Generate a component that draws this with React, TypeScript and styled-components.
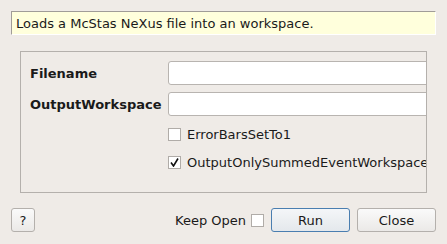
import styled, { createGlobalStyle } from 'styled-components';

const Global = createGlobalStyle`
  html, body {
    margin: 0;
    padding: 0;
    background: #efebe7;
  }
  body {
    font-family: "DejaVu Sans", "Liberation Sans", sans-serif;
    font-size: 13px;
    color: #1a1a1a;
  }
`;

const Dialog = styled.div`
  width: 447px;
  height: 244px;
  box-sizing: border-box;
  padding: 11px 11px 0 11px;
  display: flex;
  flex-direction: column;
  overflow: hidden;
`;

const Tip = styled.div`
  height: 24px;
  box-sizing: border-box;
  background: #ffffdc;
  border-top: 1px solid #a09c98;
  border-left: 1px solid #a09c98;
  border-right: 1px solid #ffffff;
  border-bottom: 1px solid #ffffff;
  padding: 0 0 0 4px;
  display: flex;
  align-items: center;
`;

const Group = styled.div`
  margin: 16px 9px 0 9px;
  height: 142px;
  box-sizing: border-box;
  border: 1px solid #b4b0ac;
  overflow: hidden;
  padding: 9px 0 0 9px;
  display: grid;
  grid-template-columns: 138px 1fr;
  grid-auto-rows: min-content;
  row-gap: 7px;
`;

const Label = styled.div`
  font-weight: bold;
  display: flex;
  align-items: center;
  height: 24px;
`;

const Input = styled.div`
  height: 24px;
  width: 280px;
  box-sizing: border-box;
  background: #ffffff;
  border: 1px solid #b8b4b0;
  border-radius: 3px;
`;

const CheckRow = styled.div<{ $top: number }>`
  grid-column: 2;
  margin-top: ${(p) => p.$top}px;
  display: flex;
  align-items: center;
  gap: 6px;
  white-space: nowrap;
  height: 14px;
`;

const Box = styled.span`
  width: 13px;
  height: 13px;
  box-sizing: border-box;
  flex: none;
  background: #ffffff;
  border: 1px solid #b0aca8;
  display: inline-flex;
  align-items: center;
  justify-content: center;
`;

const Footer = styled.div`
  margin-top: 15px;
  display: flex;
  align-items: center;
  height: 24px;
`;

const Actions = styled.div`
  margin-left: auto;
  display: flex;
  align-items: center;
  gap: 7px;
`;

const Button = styled.button<{ $primary?: boolean; $width: number }>`
  font: inherit;
  color: #1a1a1a;
  height: 24px;
  width: ${(p) => p.$width}px;
  box-sizing: border-box;
  padding: 0;
  border-radius: 3px;
  border: 1px solid ${(p) => (p.$primary ? '#4a7eb0' : '#b4b0ac')};
  background: ${(p) =>
    p.$primary
      ? 'linear-gradient(#f4f6f8, #e4e8ec)'
      : 'linear-gradient(#fafafa, #ebe9e7)'};
`;

const KeepOpen = styled.div`
  display: flex;
  align-items: center;
  gap: 5px;
`;

const Check = () => (
  <svg width="9" height="9" viewBox="0 0 9 9">
    <path d="M1 4.5 L3.5 8 L8 0.5" fill="none" stroke="#111" strokeWidth="1.6" />
  </svg>
);

export default function App() {
  return (
    <>
      <Global />
      <Dialog>
        <Tip>Loads a McStas NeXus file into an workspace.</Tip>
        <Group>
          <Label>Filename</Label>
          <Input />
          <Label>OutputWorkspace</Label>
          <Input />
          <CheckRow $top={4}>
            <Box />
            ErrorBarsSetTo1
          </CheckRow>
          <CheckRow $top={7}>
            <Box>
              <Check />
            </Box>
            OutputOnlySummedEventWorkspace
          </CheckRow>
        </Group>
        <Footer>
          <Button $width={24}>?</Button>
          <Actions>
            <KeepOpen>
              Keep Open
              <Box />
            </KeepOpen>
            <Button $primary $width={79}>
              Run
            </Button>
            <Button $width={79}>Close</Button>
          </Actions>
        </Footer>
      </Dialog>
    </>
  );
}
